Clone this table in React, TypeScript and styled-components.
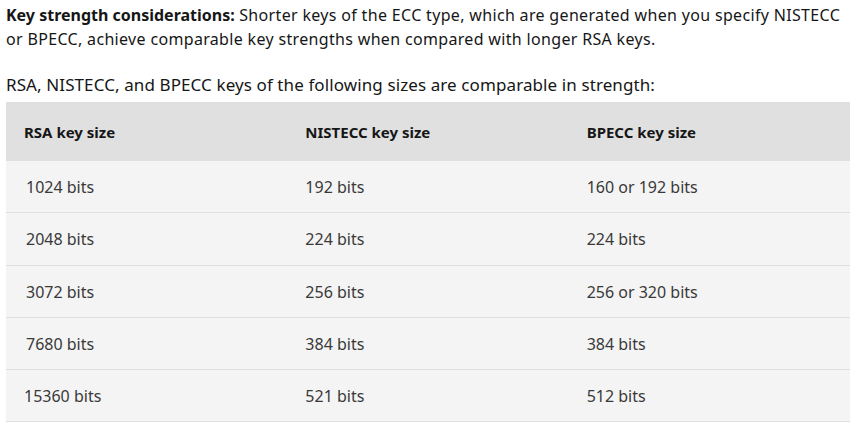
import React from 'react';
import styled, { createGlobalStyle } from 'styled-components';

const GlobalStyle = createGlobalStyle`
  body {
    margin: 0;
    background: #ffffff;
    font-family: 'Noto Sans', 'Liberation Sans', sans-serif;
    color: #161616;
  }
`;

const Page = styled.div`
  width: 844px;
  padding: 3px 0 0 6px;
`;

const Note = styled.p`
  margin: 0 0 22px;
  font-size: 16px;
  line-height: 24px;
  letter-spacing: 0.33px;

  strong {
    font-weight: 700;
    letter-spacing: 0;
  }
`;

const Lead = styled.p`
  margin: 0 0 5px;
  font-size: 17px;
  line-height: 24px;
  letter-spacing: 0.1px;
`;

const Table = styled.table`
  width: 100%;
  border-collapse: separate;
  border-spacing: 0;
  table-layout: fixed;
  line-height: 20px;
`;

const HeadCell = styled.th`
  background: #e0e0e0;
  color: #161616;
  font-size: 15px;
  font-weight: 700;
  text-align: left;
  padding: 20px 18px 19px;
`;

const Cell = styled.td<{ $indent?: boolean }>`
  background: #f4f4f4;
  color: #393939;
  font-size: 16px;
  text-align: left;
  padding: 16px 18px 15.25px ${p => (p.$indent ? '20px' : '18px')};
  border-bottom: 1px solid #e0e0e0;
`;

const rows: [string, string, string][] = [
  ['1024 bits', '192 bits', '160 or 192 bits'],
  ['2048 bits', '224 bits', '224 bits'],
  ['3072 bits', '256 bits', '256 or 320 bits'],
  ['7680 bits', '384 bits', '384 bits'],
  ['15360 bits', '521 bits', '512 bits'],
];

export default function App() {
  return (
    <>
      <GlobalStyle />
      <Page>
        <Note>
          <strong>Key strength considerations:</strong> Shorter keys of the ECC type, which are
          generated when you specify NISTECC or BPECC, achieve comparable key strengths when
          compared with longer RSA keys.
        </Note>
        <Lead>RSA, NISTECC, and BPECC keys of the following sizes are comparable in strength:</Lead>
        <Table>
          <thead>
            <tr>
              <HeadCell>RSA key size</HeadCell>
              <HeadCell>NISTECC key size</HeadCell>
              <HeadCell>BPECC key size</HeadCell>
            </tr>
          </thead>
          <tbody>
            {rows.map(([rsa, nist, bp]) => (
              <tr key={rsa}>
                <Cell $indent={rsa.length < 10}>{rsa}</Cell>
                <Cell>{nist}</Cell>
                <Cell>{bp}</Cell>
              </tr>
            ))}
          </tbody>
        </Table>
      </Page>
    </>
  );
}
